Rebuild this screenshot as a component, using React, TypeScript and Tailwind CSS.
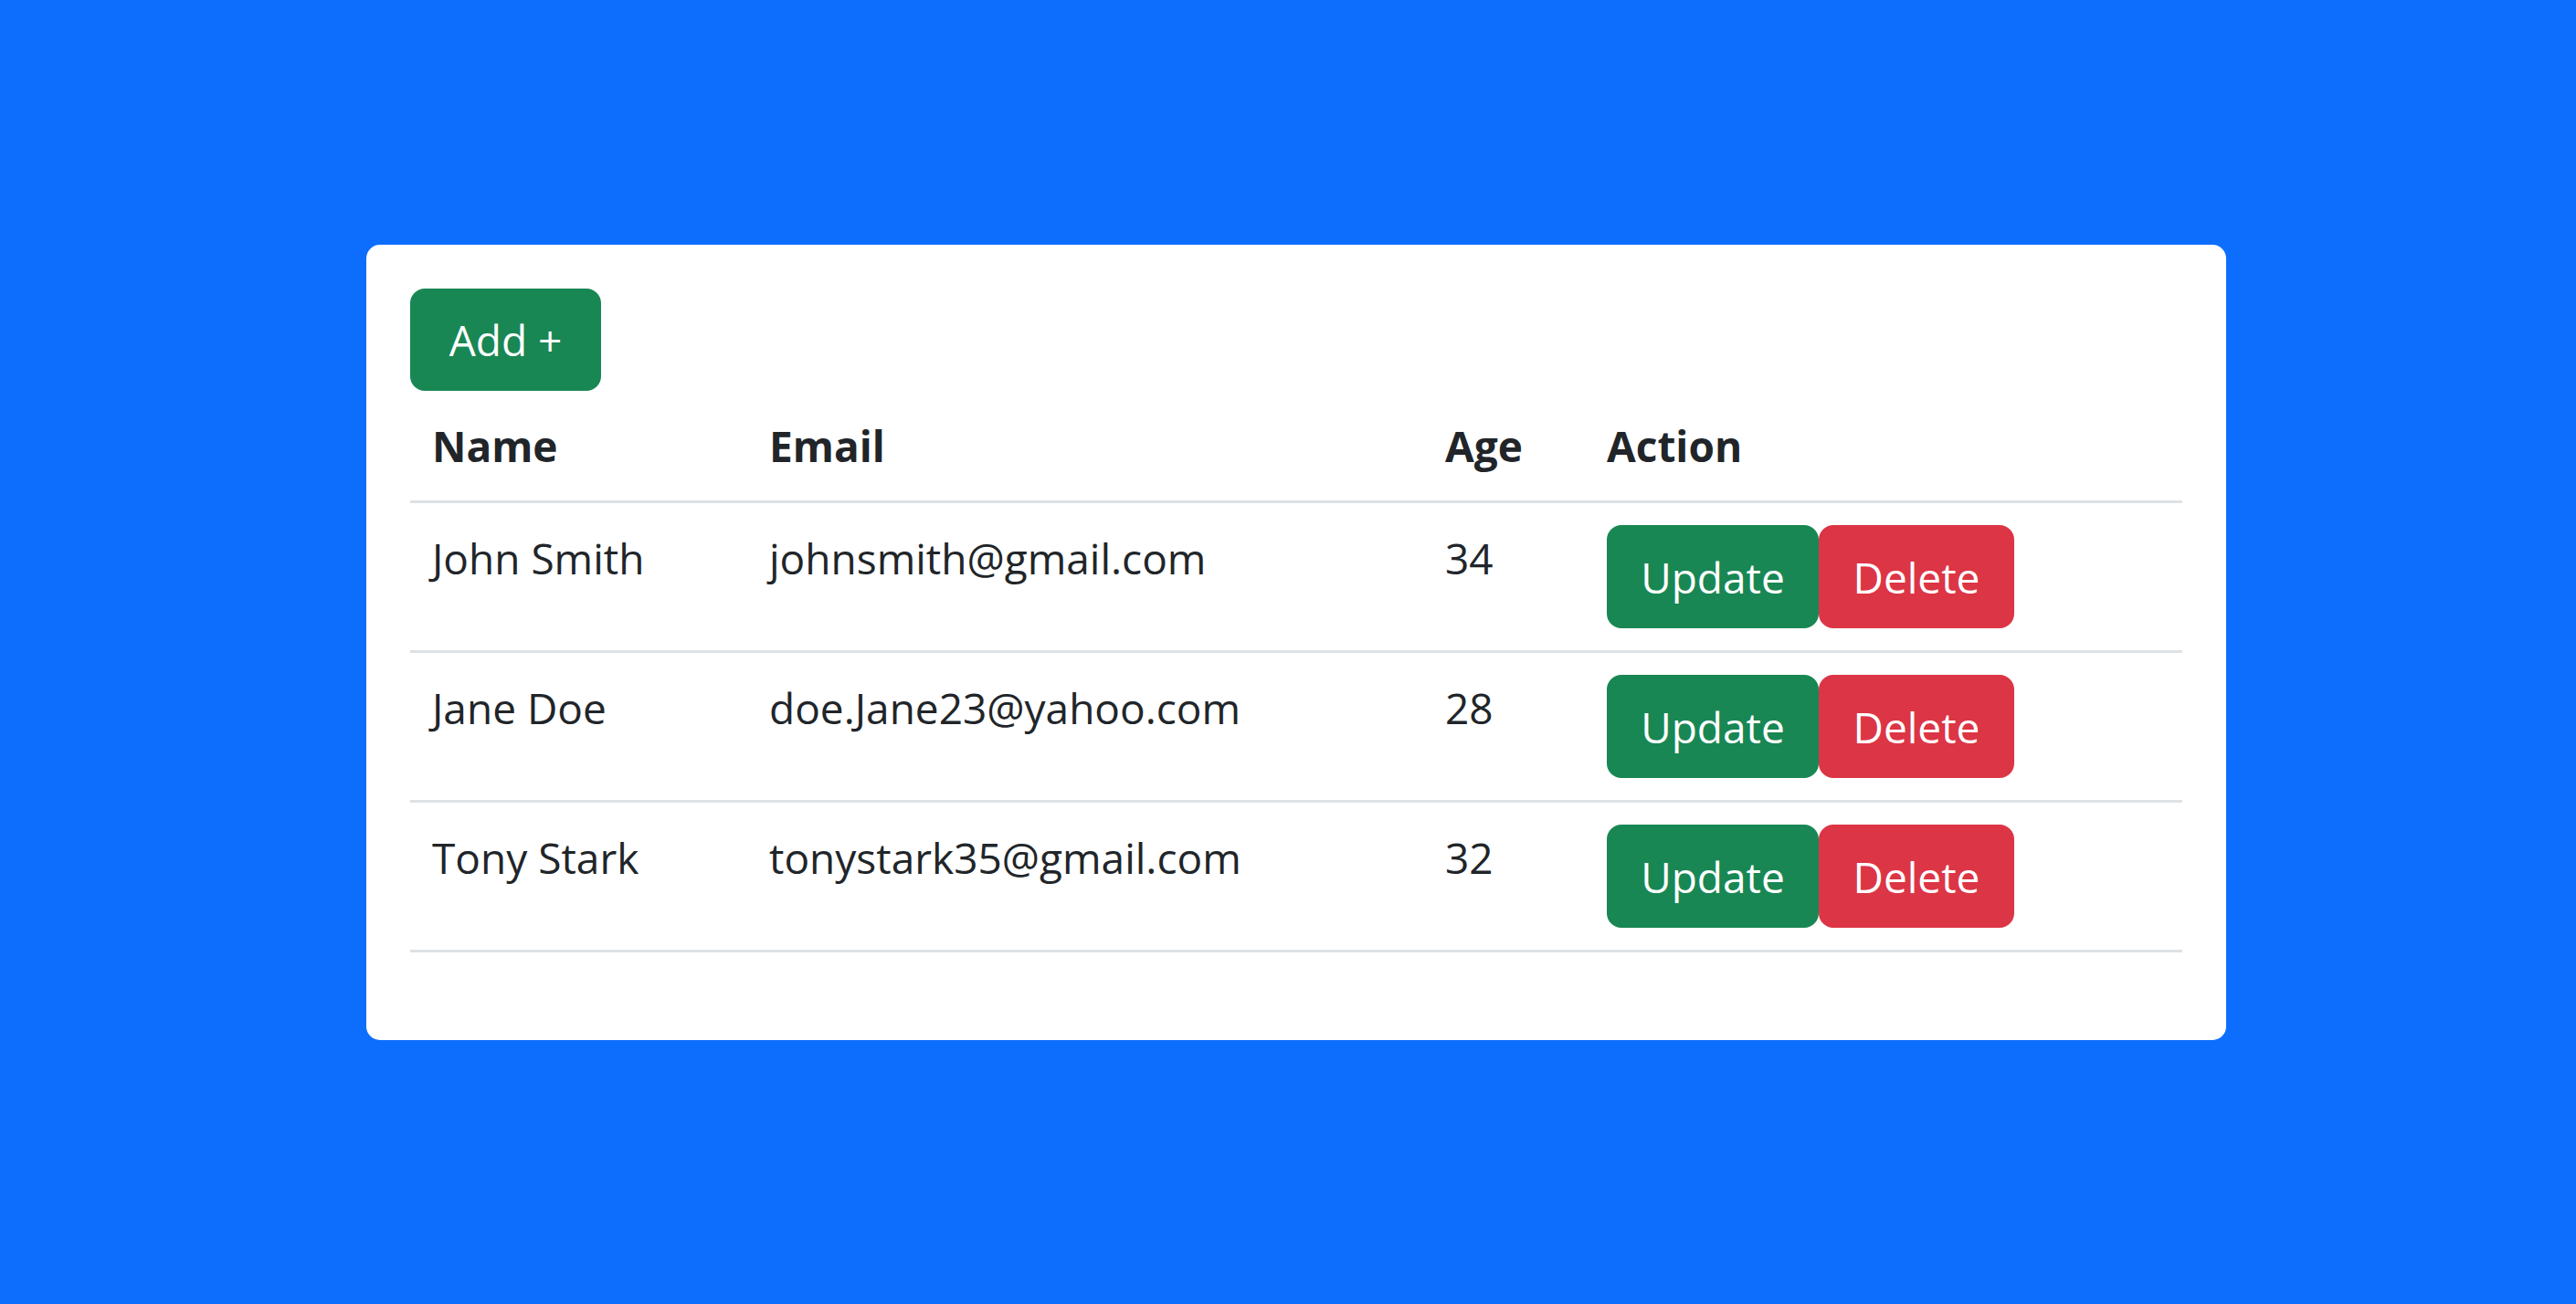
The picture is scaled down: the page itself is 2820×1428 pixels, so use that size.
import React from 'react';

const USERS = [
  { name: 'John Smith', email: 'johnsmith@gmail.com', age: 34 },
  { name: 'Jane Doe', email: 'doe.Jane23@yahoo.com', age: 28 },
  { name: 'Tony Stark', email: 'tonystark35@gmail.com', age: 32 },
];

export default function App() {
  return (
    <div className="min-h-[1428px] w-full bg-[#0d6efd] pl-[401px] pt-[268px] font-['Open_Sans','Noto_Sans',sans-serif] text-[#212529]">
      <div className="w-[2036px] rounded-[15px] bg-white p-12">
        <button className="flex h-[112px] w-[209px] items-center justify-center rounded-[16px] border-[3px] border-[#198754] bg-[#198754] text-[46px] leading-[72px] text-white">
          Add +
        </button>

        <table className="mb-12 w-full table-fixed border-collapse text-[46px] leading-[72px]">
          <thead>
            <tr className="border-b-[3px] border-[#dee2e6]">
              <th className="w-[369px] p-6 text-left font-bold">Name</th>
              <th className="w-[740px] p-6 text-left font-bold">Email</th>
              <th className="w-[177px] p-6 text-left font-bold">Age</th>
              <th className="p-6 text-left font-bold">Action</th>
            </tr>
          </thead>
          <tbody>
            {USERS.map((u) => (
              <tr key={u.email} className="border-b-[3px] border-[#dee2e6]">
                <td className="p-6 align-top">{u.name}</td>
                <td className="p-6 align-top">{u.email}</td>
                <td className="p-6 align-top">{u.age}</td>
                <td className="p-6 align-top">
                  <div className="flex">
                    <button className="flex h-[113px] w-[232px] items-center justify-center rounded-[16px] border-[3px] border-[#198754] bg-[#198754] text-white">
                      Update
                    </button>
                    <button className="flex h-[113px] w-[214px] items-center justify-center rounded-[16px] border-[3px] border-[#dc3545] bg-[#dc3545] text-white">
                      Delete
                    </button>
                  </div>
                </td>
              </tr>
            ))}
          </tbody>
        </table>
      </div>
    </div>
  );
}
